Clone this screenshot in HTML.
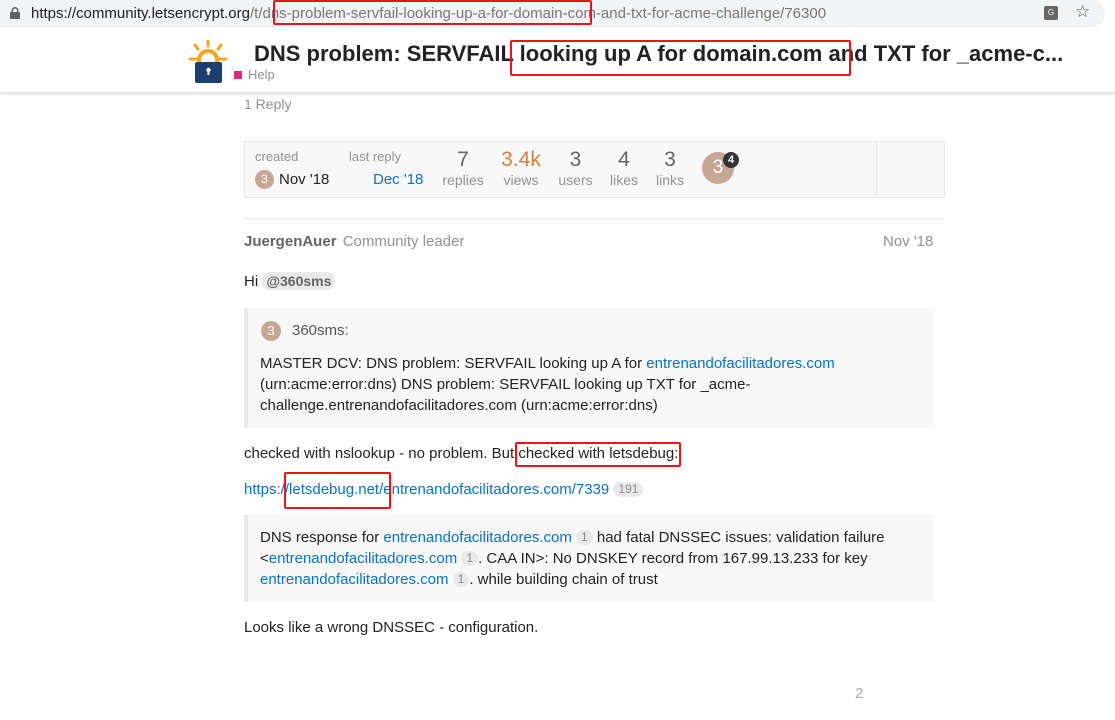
<!DOCTYPE html>
<html><head><meta charset="utf-8"><style>
*{margin:0;padding:0;box-sizing:border-box}
body{width:1115px;height:720px;overflow:hidden;background:#fff;font-family:"Liberation Sans",Arial,sans-serif;color:#222;position:relative}
.abs{position:absolute}
a,.lk{color:#0a72c4;text-decoration:none}
.red{position:absolute;border:2px solid #e8151b;border-radius:2px}
.gray{color:#919191}
.badge{display:inline-block;background:#e9e9e9;color:#888;border-radius:8px;font-size:12px;padding:1px 5px;line-height:13px;vertical-align:1px}
.av{display:inline-block;border-radius:50%;background:#c6a796;color:#fff;text-align:center}
</style></head><body>
<div class="abs" style="left:0;top:0;width:1115px;height:28px;background:#fff"></div>
<div class="abs" style="left:0;top:0;width:1105px;height:27px;background:#f1f3f4;border-radius:0 14px 14px 0"></div>
<svg class="abs" style="left:10px;top:7px" width="10" height="12" viewBox="0 0 10 12"><rect x="0" y="5" width="10" height="7" rx="1" fill="#5f6368"/><path d="M2.3 5V3.5a2.7 2.7 0 0 1 5.4 0V5" stroke="#5f6368" stroke-width="1.6" fill="none"/></svg>
<div class="abs" style="left:31px;top:5px;font-size:15px;color:#202124;white-space:nowrap">https://community.letsencrypt.org<span style="color:#777">/t/dns-problem-servfail-looking-up-a-for-domain-com-and-txt-for-acme-challenge/76300</span></div>
<div class="red" style="left:273px;top:0;width:319px;height:25px"></div>
<div class="abs" style="left:1044px;top:6px;width:14px;height:14px;background:#666;border-radius:2px;color:#fff;font-size:8px;text-align:center;line-height:14px">G</div>
<div class="abs" style="left:1075px;top:2px;font-size:17px;color:#555">☆</div>
<div class="abs" style="left:0;top:28px;width:1115px;height:64px;background:#fff;box-shadow:0 2px 3px rgba(0,0,0,.15)"></div>
<svg class="abs" style="left:186px;top:40px" width="44" height="44" viewBox="0 0 44 44">
<g stroke="#f9a51a" stroke-width="3" stroke-linecap="round"><line x1="4" y1="19" x2="10" y2="19"/><line x1="34" y1="19" x2="40" y2="19"/><line x1="9" y1="5" x2="12" y2="9"/><line x1="35" y1="5" x2="32" y2="9"/><line x1="22" y1="1" x2="22" y2="6"/></g>
<path d="M13 23v-3a9 9 0 0 1 18 0v3" stroke="#f9a51a" stroke-width="4" fill="none"/>
<rect x="9" y="22" width="27" height="21" rx="2" fill="#1d3f6f"/>
<circle cx="22.5" cy="30" r="2.2" fill="#fff"/><rect x="21.5" y="30" width="2" height="5" fill="#fff"/></svg>
<div class="abs" style="left:254px;top:41px;font-size:22px;font-weight:bold;color:#222;white-space:nowrap">DNS problem: SERVFAIL looking up A for domain.com and TXT for _acme-c...</div>
<div class="red" style="left:510px;top:40px;width:341px;height:36px"></div>
<div class="abs" style="left:234px;top:71px;width:8px;height:8px;background:#e5237a"></div>
<div class="abs" style="left:248px;top:67px;font-size:13px;color:#919191">Help</div>
<div class="abs gray" style="left:244px;top:96px;font-size:14px">1 Reply</div>
<div class="abs" style="left:244px;top:141px;width:701px;height:57px;background:#f8f8f8;border:1px solid #e9e9e9"></div>
<div class="abs" style="left:876px;top:142px;width:1px;height:55px;background:#e9e9e9"></div>
<div class="abs gray" style="left:255px;top:149px;font-size:13px">created</div>
<div class="abs gray" style="left:349px;top:149px;font-size:13px">last reply</div>
<div class="av abs" style="left:255px;top:170px;width:19px;height:19px;font-size:12px;line-height:19px">3</div>
<div class="abs" style="left:279px;top:171px;font-size:15px">Nov '18</div>
<div class="abs lk" style="left:373px;top:171px;font-size:15px">Dec '18</div>
<div class="abs" style="left:436px;top:148px;width:54px;text-align:center;font-size:21px;color:#646464">7</div>
<div class="abs gray" style="left:436px;top:172px;width:54px;text-align:center;font-size:14px">replies</div>
<div class="abs" style="left:496px;top:148px;width:50px;text-align:center;font-size:21px;color:#d68038">3.4k</div>
<div class="abs gray" style="left:496px;top:172px;width:50px;text-align:center;font-size:14px">views</div>
<div class="abs" style="left:553px;top:148px;width:45px;text-align:center;font-size:21px;color:#646464">3</div>
<div class="abs gray" style="left:553px;top:172px;width:45px;text-align:center;font-size:14px">users</div>
<div class="abs" style="left:604px;top:148px;width:40px;text-align:center;font-size:21px;color:#646464">4</div>
<div class="abs gray" style="left:604px;top:172px;width:40px;text-align:center;font-size:14px">likes</div>
<div class="abs" style="left:650px;top:148px;width:40px;text-align:center;font-size:21px;color:#646464">3</div>
<div class="abs gray" style="left:650px;top:172px;width:40px;text-align:center;font-size:14px">links</div>
<div class="av abs" style="left:702px;top:152px;width:32px;height:32px;font-size:19px;line-height:32px">3</div>
<div class="abs" style="left:723px;top:152px;width:16px;height:16px;border-radius:50%;background:#333;color:#fff;font-size:11px;font-weight:bold;text-align:center;line-height:16px">4</div>
<div class="abs" style="left:244px;top:218px;width:701px;height:1px;background:#e9e9e9"></div>
<div class="abs" style="left:244px;top:233px;font-size:15px"><b style="color:#646464">JuergenAuer</b> <span class="gray" style="margin-left:2px">Community leader</span></div>
<div class="abs gray" style="left:883px;top:233px;font-size:15px">Nov '18</div>
<div class="abs" style="left:244px;top:273px;font-size:15px">Hi <span style="background:#e9e9e9;border-radius:8px;padding:1px 4px;font-weight:bold;color:#646464;font-size:14px">@360sms</span></div>
<div class="abs" style="left:244px;top:308px;width:690px;height:120px;background:#f8f8f8;border-left:4px solid #e9e9e9"></div>
<div class="av abs" style="left:261px;top:321px;width:20px;height:20px;font-size:13px;line-height:20px">3</div>
<div class="abs" style="left:292px;top:322px;font-size:15px;color:#555">360sms:</div>
<div class="abs" style="left:260px;top:353px;width:670px;font-size:15px;line-height:21px;color:#222">MASTER DCV: DNS problem: SERVFAIL looking up A for <span class="lk">entrenandofacilitadores.com</span><br>(urn:acme:error:dns) DNS problem: SERVFAIL looking up TXT for _acme-<br>challenge.entrenandofacilitadores.com (urn:acme:error:dns)</div>
<div class="abs" style="left:244px;top:445px;font-size:15px">checked with nslookup - no problem. But checked with letsdebug:</div>
<div class="red" style="left:515px;top:442px;width:166px;height:25px"></div>
<div class="abs" style="left:244px;top:481px;font-size:15px"><span class="lk">https://letsdebug.net/entrenandofacilitadores.com/7339</span> <span class="badge">191</span></div>
<div class="red" style="left:284px;top:472px;width:107px;height:37px"></div>
<div class="abs" style="left:244px;top:515px;width:690px;height:87px;background:#f8f8f8;border-left:4px solid #e9e9e9"></div>
<div class="abs" style="left:260px;top:527px;width:670px;font-size:15px;line-height:21px">DNS response for <span class="lk">entrenandofacilitadores.com</span> <span class="badge">1</span> had fatal DNSSEC issues: validation failure<br>&lt;<span class="lk">entrenandofacilitadores.com</span> <span class="badge">1</span>. CAA IN&gt;: No DNSKEY record from 167.99.13.233 for key<br><span class="lk">entrenandofacilitadores.com</span> <span class="badge">1</span>. while building chain of trust</div>
<div class="abs" style="left:244px;top:619px;font-size:15px">Looks like a wrong DNSSEC - configuration.</div>
<div class="abs gray" style="left:855px;top:685px;font-size:15px;color:#aaa">2</div>
</body></html>
